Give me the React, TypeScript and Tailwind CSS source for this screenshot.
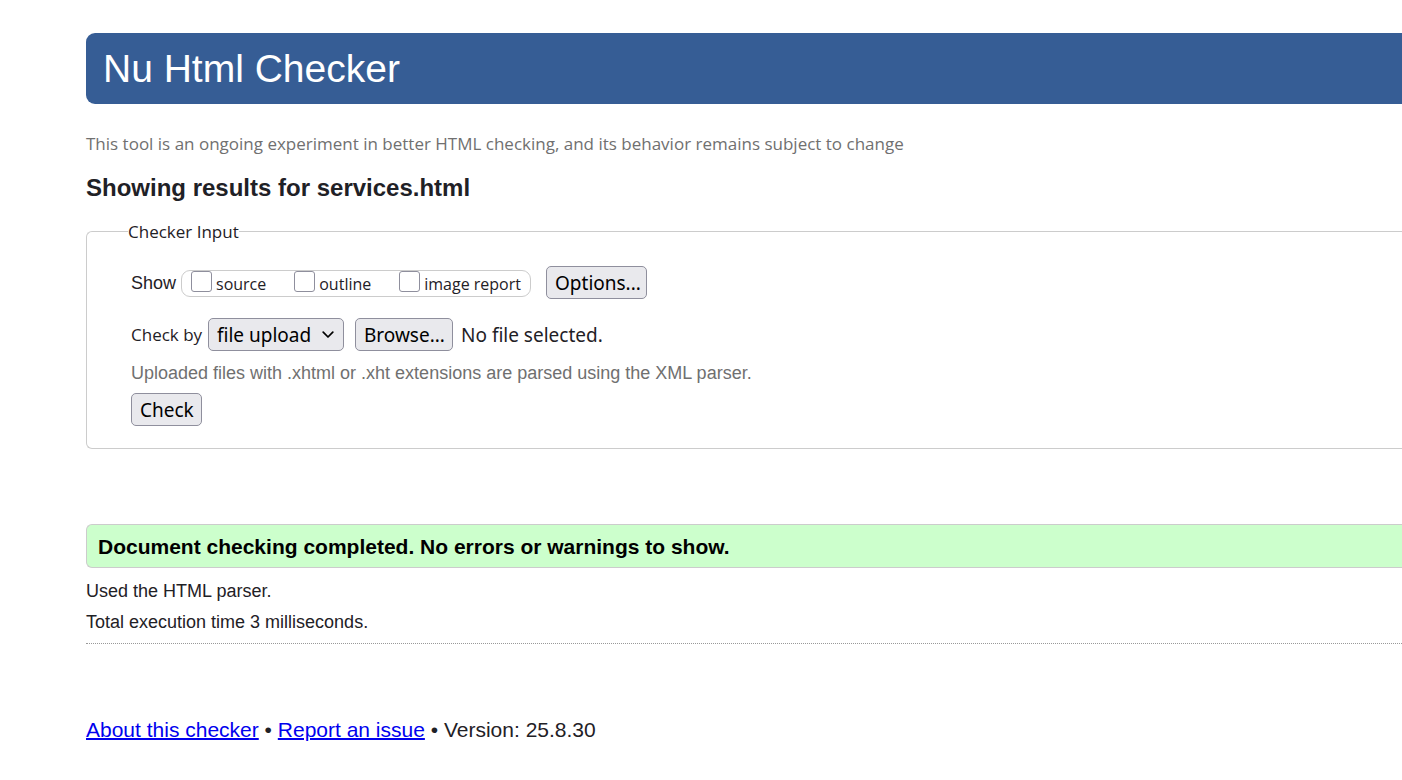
import { useRef, useState } from "react";
import type { ReactNode } from "react";

const humanist = "font-['Open_Sans','Noto_Sans',sans-serif]";
const control =
  "h-[33px] shrink-0 rounded-[5px] border border-[#8f8f9d] bg-[#e9e9ed] px-2 pt-px text-[19px] leading-[30px] text-black font-['Noto_Sans',sans-serif]";

function ShowOption({ id, children }: { id: string; children: ReactNode }) {
  return (
    <div className="flex items-start gap-1">
      <input
        id={id}
        type="checkbox"
        className="size-[21px] appearance-none rounded-[3px] border border-[#8f8f9d] bg-white checked:bg-[#0060df]"
      />
      <label htmlFor={id} className={`text-[16px] leading-[27px] ${humanist}`}>
        {children}
      </label>
    </div>
  );
}

export default function App() {
  const fileInput = useRef<HTMLInputElement>(null);
  const [fileName, setFileName] = useState("No file selected.");

  return (
    <div className="min-h-screen bg-white pt-[33px] pl-[86px] text-[18px] text-[#1f2126] font-['Liberation_Sans',Arial,sans-serif]">
      <header className="rounded-l-[9px] bg-[#365d95] px-[17px]">
        <h1 className="text-[39px] leading-[71px] text-white">Nu Html Checker</h1>
      </header>

      <main>
        <p className={`mt-[26px] text-[17px] leading-[28px] text-[#707070] ${humanist}`}>
          This tool is an ongoing experiment in better HTML checking, and its behavior remains subject to change
        </p>
        <h2 className="mt-4 text-[24px] leading-[28px] font-bold">Showing results for services.html</h2>

        <form onSubmit={(e) => e.preventDefault()}>
          <fieldset className="mt-4 rounded-l-[6px] border border-r-0 border-[#ccc] pr-6 pb-[22px] pl-11">
            <legend className={`-ml-[3px] text-[17px] leading-[27px] ${humanist}`}>Checker Input</legend>

            <div className="mt-[21px] flex h-[33px] items-center">
              <span className="w-[50px] pt-[2px]">Show</span>
              <div className="mt-[2px] flex h-[27px] w-[350px] items-start justify-between rounded-[9px] border border-[#ccc] pr-[9px] pl-[9px]">
                <ShowOption id="source">source</ShowOption>
                <ShowOption id="outline">outline</ShowOption>
                <ShowOption id="image-report">image report</ShowOption>
              </div>
              <button type="button" className={`ml-[15px] w-[101px] ${control}`}>Options...</button>
            </div>

            <div className="mt-[19px] flex h-[33px] items-center">
              <label htmlFor="method" className={`w-[77px] pt-px text-[17px] ${humanist}`}>Check by</label>
              <div className="relative">
                <select id="method" defaultValue="file" className={`w-[136px] appearance-none ${control}`}>
                  <option value="address">address</option>
                  <option value="file">file upload</option>
                  <option value="text">text input</option>
                </select>
                <svg viewBox="0 0 12 8" className="pointer-events-none absolute top-[13px] right-[10px] h-2 w-3" fill="none" stroke="black" strokeWidth="1.7" strokeLinecap="round" strokeLinejoin="round">
                  <path d="M1.2 1.2 6 6 10.8 1.2" />
                </svg>
              </div>
              <button type="button" onClick={() => fileInput.current?.click()} className={`ml-[11px] w-[98px] ${control}`}>
                Browse...
              </button>
              <input
                ref={fileInput}
                type="file"
                aria-label="File upload"
                className="hidden"
                onChange={(e) => setFileName(e.target.files?.[0]?.name ?? "No file selected.")}
              />
              <span className="ml-2 pt-px text-[19px] font-['Noto_Sans',sans-serif]">{fileName}</span>
            </div>

            <p className="mt-2 leading-[28px] text-[#707070]">
              Uploaded files with .xhtml or .xht extensions are parsed using the XML parser.
            </p>
            <button type="submit" className={`mt-[6px] block w-[71px] ${control}`}>Check</button>
          </fieldset>
        </form>

        <section className="mt-[75px]">
          <p className="rounded-l-[6px] border border-r-0 border-[#ccc] bg-[#ccffcc] px-[11px] pt-[2px] text-[21px] leading-[40px] font-bold text-black">
            Document checking completed. No errors or warnings to show.
          </p>
          <p className="mt-2 leading-[31px]">Used the HTML parser.</p>
          <p className="leading-[31px]">Total execution time 3 milliseconds.</p>
        </section>
      </main>

      <footer className="mt-[5px] border-t border-dotted border-[#999] pt-[72px] text-[21px] leading-[28px]">
        <a href="#about" className="text-[#0000ee] underline decoration-2">About this checker</a>
        {" • "}
        <a href="#issue" className="text-[#0000ee] underline decoration-2">Report an issue</a>
        {" • "}
        Version: 25.8.30
      </footer>
    </div>
  );
}
